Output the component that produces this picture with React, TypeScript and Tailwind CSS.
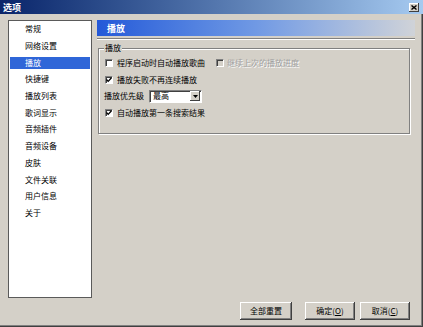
import React from "react";

const LIST_ITEMS = [
  "常规",
  "网络设置",
  "播放",
  "快捷键",
  "播放列表",
  "歌词显示",
  "音频插件",
  "音频设备",
  "皮肤",
  "文件关联",
  "用户信息",
  "关于",
];

function CheckBox({ checked = false, disabled = false }: { checked?: boolean; disabled?: boolean }) {
  return (
    <span
      className={`w-[8px] h-[8px] shrink-0 flex items-center justify-center border border-t-[#808080] border-l-[#808080] border-b-white border-r-white shadow-[inset_1px_1px_#404040] ${
        disabled ? "bg-[#d4d0c8]" : "bg-white"
      }`}
    >
      {checked && (
        <svg width="6" height="6" viewBox="0 0 6 6">
          <path d="M0.5 2.5 L2.2 4.4 L5.5 0.8" stroke="#000" strokeWidth="1.3" fill="none" />
        </svg>
      )}
    </span>
  );
}

function Button({ children, width }: { children: React.ReactNode; width: string }) {
  return (
    <button
      className={`${width} h-[18px] flex items-center justify-center bg-[#d4d0c8] text-black shadow-[inset_-1px_-1px_#404040,inset_1px_1px_#ffffff,inset_-2px_-2px_#808080]`}
    >
      {children}
    </button>
  );
}

export default function App() {
  return (
    <div className="w-[423px] h-[327px] flex flex-col bg-[#d4d0c8] text-[8px] leading-none text-black font-['Noto_Sans_CJK_SC',sans-serif] shadow-[inset_-1px_-1px_#404040,inset_-2px_-2px_#808080] overflow-hidden select-none">
      {/* title bar */}
      <div className="h-[14px] shrink-0 flex items-center justify-between pl-[3px] pr-[4px] bg-linear-to-r from-[#0a246a] to-[#a6caf0]">
        <span className="text-white font-bold text-[9px]">选项</span>
        <span className="w-[10px] h-[9px] flex items-center justify-center bg-[#d4d0c8] shadow-[inset_-1px_-1px_#404040,inset_1px_1px_#ffffff]">
          <svg width="6" height="5" viewBox="0 0 6 5">
            <path d="M0.5 0.5 L5.5 4.5 M5.5 0.5 L0.5 4.5" stroke="#000" strokeWidth="1.4" />
          </svg>
        </span>
      </div>

      <div className="flex-1 flex flex-col px-[8px] pt-[6px]">
        <div className="h-[278px] flex gap-[5px]">
          {/* category list */}
          <div className="w-[84px] h-full bg-white border border-[#5a5a5a] flex flex-col">
            {LIST_ITEMS.map((item) => (
              <div key={item} className="h-[16.7px] flex items-center">
                <div
                  className={`w-full h-[12px] mx-[1px] flex items-center pl-[15px] ${
                    item === "播放" ? "bg-[#2f66d8] text-white" : ""
                  }`}
                >
                  {item}
                </div>
              </div>
            ))}
          </div>

          {/* settings panel */}
          <div className="flex-1 flex flex-col">
            <div className="h-[16px] flex items-center pl-[10px] bg-linear-to-r from-[#2458d8] via-[#7099e4] to-[#d0d3d8]">
              <span className="text-white font-bold text-[9px]">播放</span>
            </div>
            <div className="mt-[2px] border-t border-t-[#808080] border-b border-b-white" />

            <fieldset className="mt-[4px] ml-[1px] mr-[5px] h-[90px] border border-[#808080] shadow-[1px_1px_#ffffff,inset_1px_1px_#ffffff] px-[5px] pt-[3px]">
              <legend className="px-[1px] bg-[#d4d0c8]">播放</legend>
              <div className="flex flex-col">
                <div className="h-[16.5px] flex items-center pl-[1px]">
                  <CheckBox />
                  <span className="ml-[4px]">程序启动时自动播放歌曲</span>
                  <span className="ml-[11px] flex items-center">
                    <CheckBox disabled />
                    <span className="ml-[3px] text-[#a0a0a0] [text-shadow:1px_1px_#ffffff]">继续上次的播放进度</span>
                  </span>
                </div>
                <div className="h-[16.5px] flex items-center pl-[1px]">
                  <CheckBox checked />
                  <span className="ml-[4px]">播放失败不再连续播放</span>
                </div>
                <div className="h-[16.5px] flex items-center">
                  <span>播放优先级</span>
                  <div className="ml-[5px] w-[53px] h-[13px] flex items-center bg-white border border-t-[#808080] border-l-[#808080] border-b-white border-r-white shadow-[inset_1px_1px_#404040]">
                    <span className="flex-1 pl-[3px]">最高</span>
                    <span className="w-[10px] h-[10px] mr-[1px] flex items-center justify-center bg-[#d4d0c8] shadow-[inset_-1px_-1px_#404040,inset_1px_1px_#ffffff]">
                      <svg width="5" height="3" viewBox="0 0 5 3">
                        <path d="M0 0 H5 L2.5 3 Z" fill="#000" />
                      </svg>
                    </span>
                  </div>
                </div>
                <div className="h-[16.5px] flex items-center pl-[1px]">
                  <CheckBox checked />
                  <span className="ml-[4px]">自动播放第一条搜索结果</span>
                </div>
              </div>
            </fieldset>
          </div>
        </div>

        {/* dialog buttons */}
        <div className="mt-[4px] flex justify-end pr-[5px]">
          <Button width="w-[52px]">全部重置</Button>
          <div className="ml-[13px]">
            <Button width="w-[50px]">
              确定(<u>O</u>)
            </Button>
          </div>
          <div className="ml-[5px]">
            <Button width="w-[50px]">
              取消(<u>C</u>)
            </Button>
          </div>
        </div>
      </div>
    </div>
  );
}
